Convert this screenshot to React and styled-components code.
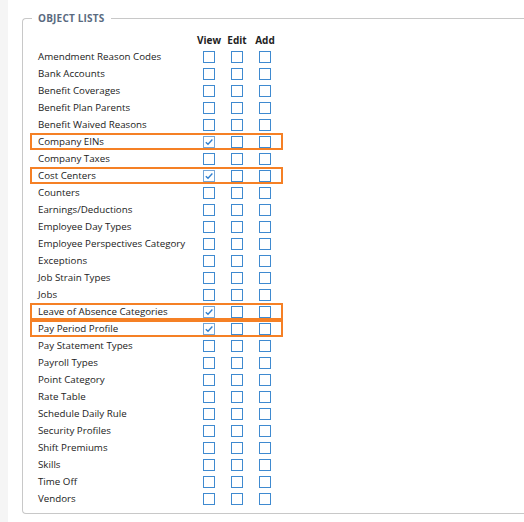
import React from "react";
import styled, { createGlobalStyle } from "styled-components";

const ITEMS = [
  ["Amendment Reason Codes"],
  ["Bank Accounts"],
  ["Benefit Coverages"],
  ["Benefit Plan Parents"],
  ["Benefit Waived Reasons"],
  ["Company EINs", true],
  ["Company Taxes"],
  ["Cost Centers", true],
  ["Counters"],
  ["Earnings/Deductions"],
  ["Employee Day Types"],
  ["Employee Perspectives Category"],
  ["Exceptions"],
  ["Job Strain Types"],
  ["Jobs"],
  ["Leave of Absence Categories", true],
  ["Pay Period Profile", true],
  ["Pay Statement Types"],
  ["Payroll Types"],
  ["Point Category"],
  ["Rate Table"],
  ["Schedule Daily Rule"],
  ["Security Profiles"],
  ["Shift Premiums"],
  ["Skills"],
  ["Time Off"],
  ["Vendors"],
];

const GlobalStyles = createGlobalStyle`
  html, body {
    margin: 0;
    background: #ffffff;
    font-family: "Open Sans", "Noto Sans", sans-serif;
    color: #222222;
    overflow: hidden;
  }
`;

const Checkbox = ({ checked }) => (
  <Box $checked={checked}>
    {checked && (
      <svg width="10" height="10" viewBox="0 0 10 10">
        <polyline
          points="1.8,5.2 4,7.2 8.4,2.6"
          fill="none"
          stroke="#2f7fd0"
          strokeWidth="1.4"
        />
      </svg>
    )}
  </Box>
);

const App = () => {
  return (
    <Page>
      <GlobalStyles />
      <Fieldset>
        <Legend>Object Lists</Legend>
        <HeaderRow>
          <span />
          <ColHead>View</ColHead>
          <ColHead>Edit</ColHead>
          <ColHead>Add</ColHead>
        </HeaderRow>
        {ITEMS.map(([label, marked]) => (
          <Row key={label} $marked={marked}>
            <Label>{label}</Label>
            <Cell>
              <Checkbox checked={marked} />
            </Cell>
            <Cell>
              <Checkbox />
            </Cell>
            <Cell>
              <Checkbox />
            </Cell>
          </Row>
        ))}
      </Fieldset>
    </Page>
  );
};

const Page = styled.div`
  width: 524px;
  height: 522px;
  box-sizing: border-box;
  overflow: hidden;
  border-left: 8px solid #f5f5f5;
  padding: 11px 0 0 14px;
`;

const Fieldset = styled.fieldset`
  margin: 0;
  width: 502px;
  box-sizing: border-box;
  border: 1px solid #c8c8c8;
  border-right: none;
  border-radius: 4px 0 0 4px;
  padding: 6px 0 6px 7px;
`;

const Legend = styled.legend`
  margin-left: 2px;
  padding: 0 6px;
  font-size: 10px;
  line-height: 14px;
  font-weight: 700;
  text-transform: uppercase;
  letter-spacing: 0.2px;
  color: #5a6a80;
`;

const Grid = styled.div`
  display: grid;
  grid-template-columns: 165px 28px 28px 28px;
  align-items: center;
  width: 253px;
  height: 17px;
  box-sizing: border-box;
`;

const HeaderRow = styled(Grid)``;

const ColHead = styled.span`
  font-size: 10px;
  font-weight: 700;
  text-align: center;
  line-height: 16px;
`;

const Row = styled(Grid)`
  padding-left: 8px;
  grid-template-columns: 157px 28px 28px 28px;
  outline: ${(p) => (p.$marked ? "2px solid #f58025" : "none")};
  outline-offset: -2px;
`;

const Label = styled.span`
  font-size: 9.75px;
  line-height: 16px;
  white-space: nowrap;
`;

const Cell = styled.div`
  display: flex;
  justify-content: center;
  align-items: center;
`;

const Box = styled.span`
  display: flex;
  align-items: center;
  justify-content: center;
  width: 12px;
  height: 12px;
  box-sizing: border-box;
  border: 1.5px solid ${(p) => (p.$checked ? "#74a6d8" : "#3f8ad0")};
  background: #ffffff;
`;

export default App;
